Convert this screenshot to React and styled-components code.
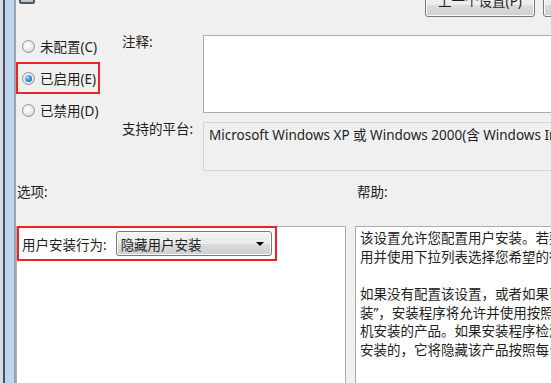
import styled, { createGlobalStyle } from "styled-components";

const GlobalStyle = createGlobalStyle`
  html, body {
    margin: 0;
    padding: 0;
    background: #f0f0f0;
  }
  body {
    font-family: "Noto Sans", "Noto Sans CJK SC", sans-serif;
    font-size: 13.5px;
    color: #1e1e1e;
  }
`;

const RED = "#ec2428";

const Screen = styled.div`
  width: 551px;
  height: 383px;
  display: flex;
  overflow: hidden;
`;

const Frame = styled.div`
  width: 16px;
  flex-shrink: 0;
  background: linear-gradient(
    to right,
    #d9dde2 0 3px,
    #4d4f52 3px 5px,
    #bcd6ee 5px 14px,
    #9ea2a6 14px 16px
  );
`;

const Dialog = styled.div`
  flex: 1;
  display: flex;
  flex-direction: column;
  overflow: hidden;
  min-width: 0;
`;

const TopBar = styled.div`
  height: 18px;
  flex-shrink: 0;
  display: flex;
  align-items: flex-end;
  overflow: hidden;
`;

const CornerIcon = styled.div`
  width: 16px;
  height: 16px;
  margin: 0 0 14px 3px;
  box-sizing: border-box;
  border: 2px solid #555;
  border-radius: 2px;
  background: linear-gradient(#e9eef3, #b8c4cf);
  flex-shrink: 0;
`;

const NavButton = styled.button`
  flex-shrink: 0;
  width: ${(p) => p.$w}px;
  height: 25px;
  margin-left: ${(p) => p.$ml}px;
  margin-bottom: 1px;
  box-sizing: border-box;
  border: 1px solid #7a7a7a;
  border-radius: 3px;
  background: linear-gradient(#f4f4f4 0%, #ebebeb 50%, #dcdcdc 51%, #d0d0d0 100%);
  box-shadow: inset 0 0 0 1px #fbfbfb;
  font: inherit;
  color: #1e1e1e;
  padding: 1px 0 0;
  display: flex;
  align-items: flex-start;
  justify-content: center;
  line-height: 14px;
  white-space: nowrap;
  overflow: hidden;
`;

const Upper = styled.div`
  display: flex;
  flex-shrink: 0;
`;

const RadioColumn = styled.div`
  width: 106px;
  flex-shrink: 0;
  padding-top: 12px;
  display: flex;
  flex-direction: column;
`;

const RadioRow = styled.label`
  width: 84px;
  height: 32px;
  box-sizing: border-box;
  border: 2px solid ${(p) => (p.$marked ? RED : "transparent")};
  padding-left: 4px;
  display: flex;
  align-items: center;
  gap: 5px;
  white-space: nowrap;
`;

const RadioDot = styled.span`
  width: 13px;
  height: 13px;
  box-sizing: border-box;
  border-radius: 50%;
  border: 1px solid #8f9295;
  background: radial-gradient(circle at 40% 40%, #ffffff 0%, #e6e6e6 60%, #cfcfcf 100%);
  display: flex;
  align-items: center;
  justify-content: center;
  flex-shrink: 0;

  &::after {
    content: "";
    display: ${(p) => (p.$checked ? "block" : "none")};
    width: 7px;
    height: 7px;
    border-radius: 50%;
    background: radial-gradient(circle at 35% 35%, #9fdcff 0%, #2f8ed8 55%, #0d4f8c 100%);
  }
`;

const Fields = styled.div`
  flex: 1;
  padding-top: 17px;
  display: grid;
  grid-template-columns: 81px 1fr;
  grid-template-rows: 78px 49px;
  row-gap: 9px;
  min-width: 0;
`;

const FieldLabel = styled.div`
  line-height: 14px;
  white-space: nowrap;
`;

const Comment = styled.div`
  background: #fff;
  border: 1px solid #abadb3;
  border-right: none;
`;

const Platform = styled.div`
  border: 1px solid #d5d5d5;
  border-right: none;
  padding: 3px 0 0 5px;
  line-height: 18px;
  white-space: nowrap;
  overflow: hidden;
`;

const SectionHeads = styled.div`
  margin-top: 12px;
  display: grid;
  grid-template-columns: 330px 1fr;
  column-gap: 9px;
  line-height: 18px;
  flex-shrink: 0;
`;

const Head = styled.div`
  padding-left: ${(p) => p.$pl}px;
`;

const Panels = styled.div`
  margin-top: 25px;
  flex: 1;
  display: grid;
  grid-template-columns: 330px 1fr;
  column-gap: 9px;
  min-height: 0;
`;

const OptionsBox = styled.div`
  background: #fff;
  border: 1px solid #abadb3;
  border-bottom: none;
`;

const OptionRow = styled.div`
  width: 260px;
  height: 35px;
  margin: -1px 0 0 0;
  box-sizing: border-box;
  border: 2px solid ${RED};
  padding-left: 3px;
  display: flex;
  align-items: center;
  gap: 9px;
  white-space: nowrap;
`;

const Select = styled.div`
  width: 156px;
  height: 25px;
  box-sizing: border-box;
  border: 1px solid #7a7a7a;
  border-radius: 3px;
  background: linear-gradient(#f3f3f3 0%, #ebebeb 50%, #dddddd 51%, #cfcfcf 100%);
  box-shadow: inset 0 0 0 1px #fafafa;
  display: flex;
  align-items: center;
  justify-content: space-between;
  padding: 0 7px 0 4px;
`;

const Caret = styled.span`
  width: 0;
  height: 0;
  border-left: 4px solid transparent;
  border-right: 4px solid transparent;
  border-top: 4px solid #000;
`;

const HelpBox = styled.div`
  background: #fff;
  border: 1px solid #abadb3;
  border-right: none;
  border-bottom: none;
  padding: 2px 0 0 4px;
  line-height: 18.7px;
  white-space: nowrap;
  overflow: hidden;
`;

const HelpLine = styled.div`
  height: 18.7px;
`;

const radios = [
  { label: "未配置(C)", checked: false },
  { label: "已启用(E)", checked: true, marked: true },
  { label: "已禁用(D)", checked: false },
];

const helpText = [
  "该设置允许您配置用户安装。若要配置该设置，请将其设置为已启",
  "用并使用下拉列表选择您希望的行为。",
  "",
  "如果没有配置该设置，或者如果已启用该设置并选择了“允许用户安",
  "装”，安装程序将允许并使用按照每用户安装的产品，而不是按照每台计",
  "机安装的产品。如果安装程序检测到按照每用户安装的产品，而不是按照",
  "安装的，它将隐藏该产品按照每台计算机安装的产品。",
];

export default function App() {
  return (
    <>
      <GlobalStyle />
      <Screen>
        <Frame />
        <Dialog>
          <TopBar>
            <CornerIcon />
            <NavButton $w={110} $ml={390}>上一个设置(P)</NavButton>
            <NavButton $w={110} $ml={8}>下一个设置(N)</NavButton>
          </TopBar>
          <Upper>
            <RadioColumn>
              {radios.map((r) => (
                <RadioRow key={r.label} $marked={r.marked}>
                  <RadioDot $checked={r.checked} />
                  {r.label}
                </RadioRow>
              ))}
            </RadioColumn>
            <Fields>
              <FieldLabel>注释:</FieldLabel>
              <Comment />
              <FieldLabel>支持的平台:</FieldLabel>
              <Platform>Microsoft Windows XP 或 Windows 2000(含 Windows Installer v2.0)</Platform>
            </Fields>
          </Upper>
          <SectionHeads>
            <Head $pl={1}>选项:</Head>
            <Head $pl={2}>帮助:</Head>
          </SectionHeads>
          <Panels>
            <OptionsBox>
              <OptionRow>
                用户安装行为:
                <Select>
                  <span>隐藏用户安装</span>
                  <Caret />
                </Select>
              </OptionRow>
            </OptionsBox>
            <HelpBox>
              {helpText.map((line, i) => (
                <HelpLine key={i}>{line}</HelpLine>
              ))}
            </HelpBox>
          </Panels>
        </Dialog>
      </Screen>
    </>
  );
}
